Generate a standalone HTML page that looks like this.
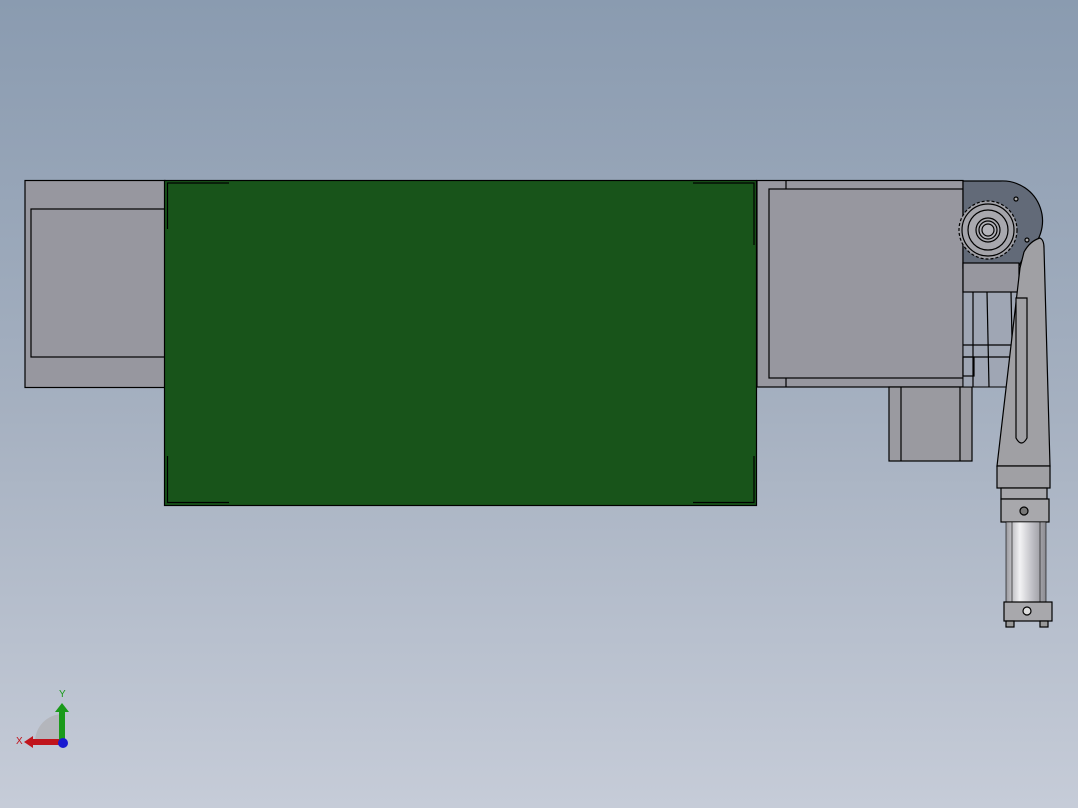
<!DOCTYPE html>
<html><head><style>
html,body{margin:0;padding:0;width:1078px;height:808px;overflow:hidden;}
body{background:linear-gradient(180deg,#8a9bb0 0%,#a5b0c0 50%,#c6ccd8 100%);}
svg{position:absolute;left:0;top:0;}
</style></head><body>
<svg width="1078" height="808" viewBox="0 0 1078 808" stroke="#000" stroke-width="1.2">
<defs>
<linearGradient id="cyl" x1="0" x2="1">
<stop offset="0" stop-color="#9a9aa0"/><stop offset="0.35" stop-color="#f2f2f4"/><stop offset="0.7" stop-color="#b8b8be"/><stop offset="1" stop-color="#8c8c92"/>
</linearGradient>
</defs>
<rect x="25" y="180.5" width="140" height="207" fill="#97979f"/>
<rect x="31" y="209" width="134" height="148" fill="#97979f"/>
<rect x="757" y="180.5" width="206" height="206.5" fill="#97979f"/>
<rect x="769" y="189" width="194" height="189" fill="#97979f"/>
<line x1="786" y1="181" x2="786" y2="189"/><line x1="786" y1="378" x2="786" y2="387"/>
<rect x="889" y="387" width="83" height="74" fill="#9a9aa0"/>
<line x1="901" y1="387" x2="901" y2="461"/><line x1="960" y1="387" x2="960" y2="461"/>
<rect x="963" y="292" width="60" height="95" fill="#9fa6b4" stroke-width="1"/>
<line x1="973" y1="292" x2="973" y2="387"/><line x1="987" y1="292" x2="989" y2="387"/>
<line x1="1011" y1="292" x2="1013" y2="387"/>
<line x1="963" y1="345" x2="1022" y2="345"/><line x1="963" y1="357" x2="1022" y2="357"/>
<rect x="963" y="357" width="11" height="19" fill="none"/>
<path d="M963 181 L1000 181 A40 40 0 0 1 1025 254 L1018 268 L963 268 Z" fill="#626a78"/>
<circle cx="988" cy="230" r="29" fill="#a0a0a6" stroke-dasharray="3 2"/>
<circle cx="988" cy="230" r="26" fill="#a4a4aa"/>
<circle cx="988" cy="230" r="20" fill="#a8a8ae"/>
<circle cx="988" cy="230" r="12" fill="#a8a8ae"/>
<circle cx="988" cy="230" r="9" fill="#b0b0b6"/>
<circle cx="988" cy="230" r="6" fill="#b4b4ba"/>
<circle cx="1016" cy="199" r="2" fill="#aaa"/><circle cx="1027" cy="240" r="2" fill="#aaa"/>
<rect x="963" y="263" width="56" height="29" fill="#97979f"/>
<path d="M1020 268 L1024 252 Q1030 241 1040 238 Q1044 240 1044 248 L1050 466 L997 466 Z" fill="#a0a0a4"/>
<path d="M1016 298 L1016 438 Q1021.5 448 1027 438 L1027 298 Z" fill="#a0a0a4"/>
<rect x="997" y="466" width="53" height="22" fill="#a0a0a4"/>
<rect x="1001" y="488" width="46" height="11" fill="#a8a8ac"/>
<rect x="1001" y="499" width="48" height="23" fill="#a8a8ac"/>
<circle cx="1024" cy="511" r="4" fill="#777"/>
<rect x="1006" y="522" width="40" height="80" fill="url(#cyl)" stroke-width="0.6"/>
<line x1="1012" y1="522" x2="1012" y2="602" stroke-width="0.6"/><line x1="1040" y1="522" x2="1040" y2="602" stroke-width="0.6"/>
<rect x="1004" y="602" width="48" height="19" fill="#a8a8ac"/>
<circle cx="1027" cy="611" r="4" fill="#ddd"/>
<rect x="1006" y="621" width="8" height="6" fill="#999"/><rect x="1040" y="621" width="8" height="6" fill="#999"/>
<rect x="164.5" y="180.5" width="592" height="325" fill="#18541a"/>
<path d="M167.5 229 L167.5 183 L229 183 M693 183 L754 183 L754 245 M167.5 456 L167.5 502.5 L229 502.5 M693 502.5 L754 502.5 L754 456" fill="none" stroke="#000" stroke-width="1.2"/>
<g stroke="none">
<path d="M35 742 A28 28 0 0 1 62 714 L62 742 Z" fill="#b4b6bc"/>
<rect x="30" y="739" width="32" height="6" fill="#c0141c"/>
<path d="M24 742 L33 736 L33 748 Z" fill="#c0141c"/>
<rect x="59" y="712" width="6" height="30" fill="#1a9a1a"/>
<path d="M62 703 L69 712 L55 712 Z" fill="#1a9a1a"/>
<circle cx="63" cy="743" r="5" fill="#1a1ad0"/>
<text x="59" y="697" font-family="Liberation Sans,sans-serif" font-size="10" fill="#1a9a1a">Y</text>
<text x="16" y="744" font-family="Liberation Sans,sans-serif" font-size="10" fill="#c0141c">X</text>
</g>
</svg>
</body></html>
